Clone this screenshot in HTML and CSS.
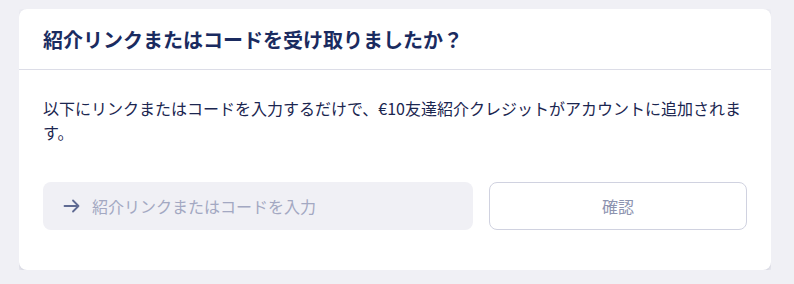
FILE: index.html
```html
<!DOCTYPE html>
<html lang="ja">
<head>
    <meta charset="UTF-8">
    <meta name="viewport" content="width=device-width, initial-scale=1.0">
    <title>紹介コード</title>
    <link rel="stylesheet" href="styles.css">
</head>
<body>
    <div class="card">
        <div class="card-header">
            <h2>紹介リンクまたはコードを受け取りましたか？</h2>
        </div>
        <div class="card-body">
            <p class="desc">以下にリンクまたはコードを入力するだけで、€10友達紹介クレジットがアカウントに追加されます。</p>
            <div class="form-row">
                <label class="code-input">
                    <svg class="arrow" width="18" height="18" viewBox="0 0 18 18" fill="none">
                        <path d="M1.5 9h14M10 3.5L15.5 9 10 14.5" stroke="#5f6a92" stroke-width="1.8" stroke-linecap="round" stroke-linejoin="round"/>
                    </svg>
                    <input type="text" placeholder="紹介リンクまたはコードを入力">
                </label>
                <button class="confirm-btn">確認</button>
            </div>
        </div>
    </div>
</body>
</html>
```

FILE: styles.css
```css
body {
    margin: 9px 23px 0 19px;
    background-color: #f0f0f5;
    font-family: "Noto Sans CJK JP", "Noto Sans", sans-serif;
    color: #1b2650;
}
.card {
    background-color: #fff;
    border-radius: 8px;
    box-shadow: 0 2px 5px rgba(40, 45, 90, 0.18);
}
.card-header {
    height: 60px;
    display: flex;
    align-items: center;
    padding: 0 24px;
    border-bottom: 1px solid #dcdde7;
}
.card-header h2 {
    margin: 0;
    font-size: 20px;
    font-weight: 700;
    color: #1a2b60;
}
.card-body {
    padding: 26px 24px 40px;
}
.desc {
    margin: 0 0 38px;
    font-size: 16px;
    line-height: 24px;
}
.form-row {
    display: grid;
    grid-template-columns: 5fr 3fr;
    gap: 16px;
}
.code-input {
    display: flex;
    align-items: center;
    height: 48px;
    padding: 0 20px;
    background-color: #f0f0f5;
    border-radius: 8px;
    gap: 11px;
}
.code-input input {
    flex: 1;
    border: none;
    background: transparent;
    outline: none;
    font-family: inherit;
    font-size: 16px;
    color: #1b2650;
    padding: 0;
}
.code-input input::placeholder {
    color: #a3a8c2;
}
.confirm-btn {
    height: 48px;
    background-color: #fff;
    border: 1px solid #d0d2e0;
    border-radius: 8px;
    font-family: inherit;
    font-size: 16px;
    color: #8d93af;
    cursor: pointer;
}
```
